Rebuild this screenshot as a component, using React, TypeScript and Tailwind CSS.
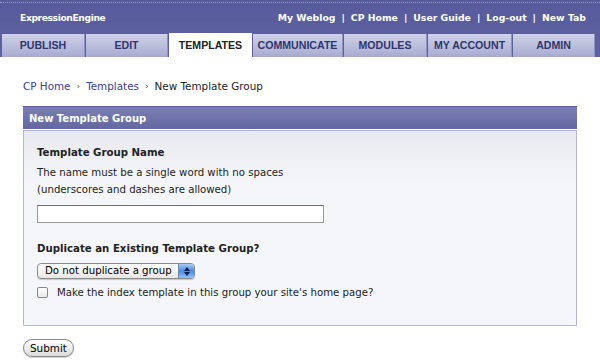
import React from "react";

const tabs = [
  { label: "PUBLISH", w: "w-[83px]" },
  { label: "EDIT", w: "w-[82px]" },
  { label: "TEMPLATES", w: "w-[83px]", active: true },
  { label: "COMMUNICATE", w: "w-[90px]" },
  { label: "MODULES", w: "w-[83px]" },
  { label: "MY ACCOUNT", w: "w-[84px]" },
  { label: "ADMIN", w: "w-[82px]" },
];

const links = ["My Weblog", "CP Home", "User Guide", "Log-out", "New Tab"];

export default function App() {
  return (
    <div className="w-[600px] h-[362px] bg-white overflow-hidden font-['DejaVu_Sans',sans-serif] text-[#222]">
      {/* header */}
      <div className="bg-gradient-to-b from-[#585b9b] to-[#5e62a0] pt-[2px]">
        <div className="border-t border-dotted border-[#9a9ccc] h-[31px] flex items-center justify-between pl-[20px] pr-[14px]">
          <span className="text-white font-bold text-[9.2px] tracking-[-0.4px]">ExpressionEngine</span>
          <div className="flex items-center text-white font-bold text-[9.3px]">
            {links.map((l, i) => (
              <React.Fragment key={l}>
                {i > 0 && <span className="mx-[6px]">|</span>}
                <span>{l}</span>
              </React.Fragment>
            ))}
          </div>
        </div>
        <div className="flex items-end gap-[1px] pl-[2px] h-[24px]">
          {tabs.map((t) =>
            t.active ? (
              <div
                key={t.label}
                className={`${t.w} h-[24px] bg-white flex items-center justify-center pt-[1px] text-[10.6px] font-bold text-[#222] font-['Liberation_Sans',sans-serif]`}
              >
                {t.label}
              </div>
            ) : (
              <div
                key={t.label}
                className={`${t.w} h-[23px] bg-gradient-to-b from-[#cfd1e6] via-[#bcbfdc] to-[#a7aacf] border-r border-[#8e92c0] flex items-center justify-center text-[10.6px] font-bold text-[#2f3570] font-['Liberation_Sans',sans-serif]`}
              >
                {t.label}
              </div>
            )
          )}
        </div>
      </div>

      {/* breadcrumb */}
      <div className="px-[23px] pt-[22px] text-[10.4px] leading-[15px] flex items-center gap-[6px]">
        <span className="text-[#3a4191]">CP Home</span>
        <span className="text-[#555] text-[9px]">›</span>
        <span className="text-[#3a4191]">Templates</span>
        <span className="text-[#555] text-[9px]">›</span>
        <span className="text-[#222]">New Template Group</span>
      </div>

      {/* panel */}
      <div className="mx-[23px] mt-[12px] w-[554px]">
        <div className="h-[23px] bg-gradient-to-b from-[#7b7fb3] to-[#6367a2] border-t border-[#5b5f99] flex items-center px-[6px] text-white font-bold text-[10px]">
          New Template Group
        </div>
        <div className="mt-[1px] border border-[#b4b6cc] bg-gradient-to-b from-[#e8e9ee] via-[#f5f6f9] via-[25%] to-[#f5f6f9] h-[196px] px-[13px] pt-[14px] text-[10.2px] leading-[15px]">
          <div className="font-bold">Template Group Name</div>
          <div className="mt-[5px]">The name must be a single word with no spaces</div>
          <div className="mt-[2px]">(underscores and dashes are allowed)</div>
          <div className="mt-[8px] w-[287px] h-[18px] bg-white border border-[#9a9a9a] border-t-[#6e6e6e]" />
          <div className="mt-[18px] font-bold">Duplicate an Existing Template Group?</div>
          <div className="mt-[7px] flex items-center w-[158px] h-[16px] rounded-[4px] border border-[#8a8a8a] bg-gradient-to-b from-white to-[#e6e6e6] shadow-[0_1px_1px_rgba(0,0,0,0.2)] overflow-hidden">
            <span className="flex-1 pl-[7px] text-[10.2px] text-black leading-none">Do not duplicate a group</span>
            <span className="w-[16px] h-full rounded-r-[3px] bg-gradient-to-b from-[#a8ccf4] via-[#4a8ae0] to-[#93c0f2] flex flex-col items-center justify-center gap-[1px] border-l border-[#6a88b8]">
              <svg width="6" height="4" viewBox="0 0 6 4"><path d="M0 4 L3 0 L6 4Z" fill="#0a1f4d" /></svg>
              <svg width="6" height="4" viewBox="0 0 6 4"><path d="M0 0 L3 4 L6 0Z" fill="#0a1f4d" /></svg>
            </span>
          </div>
          <div className="mt-[6px] flex items-center gap-[9px] h-[15px]">
            <span className="w-[11px] h-[11px] rounded-[2px] border border-[#888] bg-gradient-to-b from-white to-[#e8e8e8]" />
            <span>Make the index template in this group your site's home page?</span>
          </div>
        </div>
      </div>

      {/* submit */}
      <div className="mx-[23px] mt-[13px] flex">
        <button className="h-[18px] px-[6px] rounded-full border border-[#888] bg-gradient-to-b from-white to-[#dcdcdc] text-[10.4px] text-black leading-none shadow-[0_1px_1px_rgba(0,0,0,0.2)]">
          Submit
        </button>
      </div>
    </div>
  );
}
